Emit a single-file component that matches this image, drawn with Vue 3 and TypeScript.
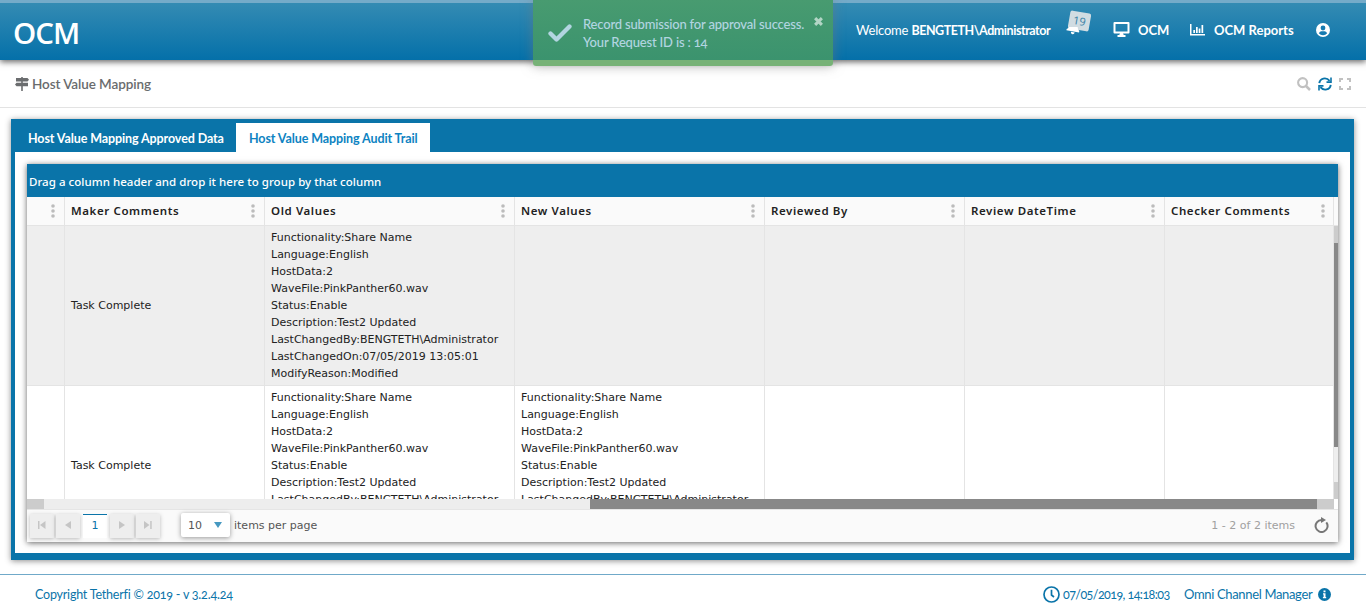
<script setup lang="ts">
interface Row { comment: string; oldValues: string[]; newValues: string[] }

const columns: string[] = ['', 'Maker Comments', 'Old Values', 'New Values', 'Reviewed By', 'Review DateTime', 'Checker Comments']

const details: string[] = [
  'Functionality:Share Name',
  'Language:English',
  'HostData:2',
  'WaveFile:PinkPanther60.wav',
  'Status:Enable',
  'Description:Test2 Updated',
  'LastChangedBy:BENGTETH\\Administrator',
  'LastChangedOn:07/05/2019 13:05:01',
  'ModifyReason:Modified',
]

const rows: Row[] = [
  { comment: 'Task Complete', oldValues: details, newValues: [] },
  { comment: 'Task Complete', oldValues: details, newValues: details },
]
</script>

<template>
  <div class="page">
    <header class="topbar">
      <div class="brand">OCM</div>
      <nav class="nav">
        <span class="welcome">Welcome <b>BENGTETH\Administrator</b></span>
        <span class="bell">
          <span class="count">19</span>
          <svg width="14" height="8" viewBox="0 0 14 8"><g transform="rotate(10 7 4)" fill="#fff"><path d="M2.800 -1H11Q11 1.500 13.200 2.800V4.500H.4V3.200Q2.500 2 2.800 -1Z" /><path d="M5 5.200H9Q8.700 7.300 7 7.300T5 5.200Z" /></g></svg>
        </span>
        <span class="link ocm">
          <svg width="17" height="15" viewBox="0 0 17 15"><path d="M1.500 1H15.500V10.500H1.500Z" fill="none" stroke="#fff" stroke-width="2" stroke-linejoin="round" /><path d="M7 11H10L10.700 13H12.500V15H4.500V13H6.300Z" fill="#fff" /></svg>
          <b>OCM</b>
        </span>
        <span class="link reports">
          <svg width="15" height="12" viewBox="0 0 15 12" fill="#fff"><path d="M0 0H1.500V10H15V11.500H0Z" /><path d="M3.300 6H5V9H3.300ZM6 3H7.700V9H6ZM8.700 4.500H10.400V9H8.700ZM11.500 1H13.200V9H11.500Z" /></svg>
          <b>OCM Reports</b>
        </span>
        <svg class="user" width="14" height="14" viewBox="0 0 14 14"><circle cx="7" cy="7" r="7" fill="#fff" /><circle cx="7" cy="5" r="2.400" fill="#167ab0" /><path d="M2.800 10.300Q4 8.300 5.300 8.300H8.700Q10 8.300 11.200 10.300Q9.500 12.300 7 12.300T2.800 10.300Z" fill="#167ab0" /></svg>
      </nav>
    </header>

    <div class="toast">
      <svg width="24" height="18" viewBox="0 0 24 18"><path d="M2.500 9.500L8.500 15.500L21.500 2.500" fill="none" stroke="#b2d5e1" stroke-width="4.300" stroke-linecap="round" stroke-linejoin="round" /></svg>
      <p>Record submission for approval success.<br>Your Request ID is : 14</p>
      <svg class="close" width="9" height="9" viewBox="0 0 8 8"><path d="M1 1L7 7M7 1L1 7" stroke="#b2d5c5" stroke-width="2.700" /></svg>
    </div>

    <div class="titlebar">
      <svg width="14" height="14" viewBox="0 0 14 14" fill="#6b6d6f"><path d="M6.200 0H7.800V14H6.200Z" /><path d="M1 1H12.500L14 2.800L12.500 4.500H1ZM1.500 5.700H13V9.200H1.500L0 7.400Z" /></svg>
      <h1>Host Value Mapping</h1>
      <span class="tools">
        <svg width="14" height="14" viewBox="0 0 14 14" fill="none" stroke="#c1c1c1"><circle cx="5.600" cy="5.600" r="4.500" stroke-width="2.100" /><path d="M9 9L13 13" stroke-width="2.500" /></svg>
        <svg width="14" height="14" viewBox="0 0 14 14" fill="none" stroke="#0a74a9" stroke-width="1.900"><path d="M1.300 6.200C1.800 1.200 8.200 -.4 11.600 3.800M12.700 7.800C12.200 12.800 5.800 14.400 2.400 10.200" /><path d="M13 .5V5.100H8.500M1 13.500V8.900H5.500" stroke-width="1.600" /></svg>
        <svg width="12" height="12" viewBox="0 0 12 12" fill="none" stroke="#c1c1c1" stroke-width="2"><path d="M1 4V1H4M8 1H11V4M11 8V11H8M4 11H1V8" /></svg>
      </span>
    </div>

    <main class="panel">
      <div class="tabs">
        <span class="tab first">Host Value Mapping Approved Data</span>
        <span class="tab active">Host Value Mapping Audit Trail</span>
      </div>
      <div class="content">
        <section class="grid">
          <div class="group">Drag a column header and drop it here to group by that column</div>
          <div class="line head">
            <div v-for="(c, i) in columns" :key="i" class="cell">
              <span>{{ c }}</span>
              <svg width="4" height="14" viewBox="0 0 4 14" fill="#bcbcbc"><circle cx="2" cy="2" r="1.800" /><circle cx="2" cy="7" r="1.800" /><circle cx="2" cy="12" r="1.800" /></svg>
            </div>
          </div>
          <div class="viewport">
            <div class="rows">
              <div v-for="(r, i) in rows" :key="i" class="line row" :class="{ alt: i === 0 }">
                <div class="cell"></div>
                <div class="cell">{{ r.comment }}</div>
                <div class="cell"><p v-for="d in r.oldValues" :key="d">{{ d }}</p></div>
                <div class="cell"><p v-for="d in r.newValues" :key="d">{{ d }}</p></div>
                <div class="cell"></div>
                <div class="cell"></div>
                <div class="cell"></div>
              </div>
            </div>
            <div class="vbar"><div class="vbtn"></div><div class="vthumb"></div><div class="vtrack"></div><div class="vbtn"></div></div>
          </div>
          <div class="hbar"><div class="hbtn"></div><div class="htrack"></div><div class="hthumb"></div><div class="hbtn"></div></div>
          <div class="pager">
            <span class="pbtn"><svg width="8" height="8" viewBox="0 0 8 8"><path d="M0 0H1.500V8H0ZM7.500 0V8L2 4Z" /></svg></span>
            <span class="pbtn"><svg width="6" height="8" viewBox="0 0 6 8"><path d="M6 0V8L0 4Z" /></svg></span>
            <span class="current">1</span>
            <span class="pbtn"><svg width="6" height="8" viewBox="0 0 6 8"><path d="M0 0V8L6 4Z" /></svg></span>
            <span class="pbtn"><svg width="8" height="8" viewBox="0 0 8 8"><path d="M0 0V8L5.500 4ZM6.200 0H7.700V8H6.200Z" /></svg></span>
            <span class="size">10<svg width="8" height="6" viewBox="0 0 8 6"><path d="M0 0H8L4 6Z" fill="#4799c1" /></svg></span>
            <span class="per">items per page</span>
            <span class="info">1 - 2 of 2 items</span>
            <svg class="reload" width="15" height="16" viewBox="0 0 15 16"><path d="M12.300 5.300A6 6 0 1 1 7.500 3" fill="none" stroke="#777" stroke-width="2" /><path d="M7 0L12 3L7 6Z" fill="#777" /></svg>
          </div>
        </section>
      </div>
    </main>

    <footer class="footer">
      <span class="copy">Copyright Tetherfi © 2019 - v 3.2.4.24</span>
      <svg class="clock" width="17" height="17" viewBox="0 0 17 17" fill="none" stroke="#0a74a9"><circle cx="8.500" cy="8.500" r="7.500" stroke-width="1.700" /><path d="M8.500 3.800V9L11 11" stroke-width="1.700" /></svg>
      <span class="date">07/05/2019, 14:18:03</span>
      <span class="product">Omni Channel Manager</span>
      <svg class="inf" width="13" height="13" viewBox="0 0 13 13"><circle cx="6.500" cy="6.500" r="6.500" fill="#0a74a9" /><path d="M5.500 2.500H7.500V4.300H5.500ZM5 5.300H7.500V9H8.200V10.200H4.900V9H5.600V6.500H5Z" fill="#fff" /></svg>
    </footer>
  </div>
</template>

<style>
body { margin: 0; overflow: hidden; background: #fff; }
</style>

<style scoped>
* { box-sizing: border-box; }
.page { position: relative; width: 1366px; height: 613px; overflow: hidden; background: #fff; font-family: Lato, "Noto Sans", sans-serif; font-size: 13px; font-variant-numeric: oldstyle-nums; }
svg { display: block; flex: none; }
span, h1 { white-space: nowrap; }
.topbar { position: relative; display: flex; align-items: center; justify-content: space-between; height: 60px; border-top: 3px solid #75abc9; padding: 0 36px 0 13px; background: linear-gradient(#348bb3, #0470a9); box-shadow: 0 2px 6px rgba(0, 0, 0, .6); color: #fff; }
.brand { font: 600 29.500px/34px "Open Sans", sans-serif; letter-spacing: -1px; padding-top: 2px; }
.nav { display: flex; align-items: center; height: 100%; padding-bottom: 4px; }
.welcome { width: 211px; letter-spacing: -.2px; }
.welcome b { font-size: 12.5px; letter-spacing: -.45px; }
.bell { position: relative; width: 46px; height: 18px; margin-top: -6px; }
.bell svg { position: absolute; left: -1px; top: 9px; }
.count { position: absolute; left: 2px; top: -6px; width: 21px; height: 18px; transform: rotate(10deg); border-radius: 2px; background: #d0dce2; color: #3e84a8; font: 11px/18px "Noto Sans", sans-serif; text-align: center; }
.link { display: flex; align-items: center; font-size: 13px; }
.ocm { width: 77px; gap: 8px; }
.reports { width: 126px; gap: 9px; }
.toast { position: absolute; z-index: 2; left: 533px; top: 0; width: 300px; height: 66px; display: flex; padding: 15px 10px 0 15px; border-radius: 0 0 3px 3px; background: linear-gradient(#489b70, #3b936e 60px, #77b277 60px, #77b277); box-shadow: 0 0 12px rgba(120, 120, 120, .55); color: #b2d5e1; }
.toast > svg:first-child { margin-top: 9px; }
.toast p { margin: 0 0 0 11px; line-height: 18px; letter-spacing: -.18px; font-weight: 500; white-space: nowrap; }
.toast .close { margin: 2px 0 0 auto; }
.titlebar { display: flex; align-items: center; height: 48px; padding: 0 15px; border-bottom: 1px solid #e3e3e3; color: #696b6d; }
.titlebar h1 { margin: 0 0 0 3px; font-size: 13.5px; font-weight: 600; letter-spacing: -.08px; }
.tools { display: flex; align-items: center; gap: 7px; margin-left: auto; }
.panel { margin: 11px 12px 0 11px; height: 441px; border: 4px solid #0a74a9; border-bottom-width: 7px; background: #fff; box-shadow: 0 1px 6px rgba(0, 0, 0, .45); }
.tabs { display: flex; height: 29px; background: #0a74a9; color: #fff; font-size: 12.5px; font-weight: 700; }
.tab { display: block; padding-left: 13px; padding-top: 1px; line-height: 30px; height: 29px; }
.first { width: 221px; letter-spacing: -.1px; }
.active { width: 194px; background: #fff; color: #0d83c2; letter-spacing: -.1px; }
.content { padding: 12px; }
.grid { width: 1311px; height: 378px; box-shadow: 0 1px 6px rgba(0, 0, 0, .6); background: #fff; font-family: "DejaVu Sans", sans-serif; font-size: 11px; }
.group { height: 33px; padding: 1px 2px 0; background: #0a74a9; color: #fff; font: 500 11.500px/33px "Noto Sans", sans-serif; letter-spacing: .04px; }
.line { display: grid; grid-template-columns: 38px 200px 250px 250px 200px 200px 169px; width: 1307px; }
.cell { border-right: 1px solid #e4e4e4; }
.head { height: 29px; width: 1311px; background: #fafafa; border-bottom: 1px solid #e4e4e4; color: #222; font: 600 11.500px/28px "Noto Sans", sans-serif; letter-spacing: .6px; }
.head .cell { display: flex; justify-content: space-between; align-items: center; padding: 0 9px 0 6px; }
.head .cell:last-child { padding-right: 8px; }
.viewport { display: flex; height: 273px; overflow: hidden; }
.rows { width: 1307px; }
.row { height: 160px; background: #fff; border-bottom: 1px solid #e4e4e4; color: #222; line-height: 17px; }
.row.alt { background: #eee; }
.row .cell { display: flex; flex-direction: column; justify-content: center; padding: 0 6px; white-space: nowrap; overflow: hidden; }
.row p { margin: 0; }
.vbar { width: 4px; height: 273px; }
.vbtn { height: 17px; background: #ccc; }
.vthumb { height: 204px; background: #888; }
.vtrack { height: 35px; background: #eee; }
.hbar { display: flex; height: 10px; background: #fff; }
.hbtn { width: 17px; background: #ccc; }
.htrack { width: 546px; background: #ededed; }
.hthumb { width: 727px; background: #888; }
.pager { display: flex; align-items: center; height: 33px; padding: 0 9px 2px 3px; border-top: 1px solid #e5e5e5; background: #fafafa; color: #555; }
.pbtn { display: flex; align-items: center; justify-content: center; width: 24px; height: 24px; margin: 2px 2px 0 0; background: #eee; box-shadow: 0 1px 4px rgba(0, 0, 0, .25); }
.pbtn svg { fill: #c5c5c5; margin-top: -3px; }
.current { width: 24px; height: 24px; margin: 2px 3px 0 1px; border-top: 1px solid #0a74a9; background: #fff; color: #0a74a9; text-align: center; line-height: 21px; }
.size { display: flex; align-items: center; justify-content: space-between; width: 49px; height: 24px; margin-left: 19px; padding: 0 8px 0 7px; border-radius: 2px; background: #fff; box-shadow: 0 1px 5px rgba(0, 0, 0, .4); }
.per { margin-left: 4px; }
.info { margin-left: auto; margin-right: 19px; color: #a0a0a0; }
.footer { display: flex; align-items: center; height: 39px; margin-top: 14px; padding: 0 35px; border-top: 1px solid #70a9c9; color: #0a74a9; background: #fff; }
.copy { margin-right: auto; font-size: 12.5px; letter-spacing: -.21px; }
.date { width: 121px; margin-left: 3px; font-size: 12.5px; letter-spacing: -.57px; }
.product { width: 130px; margin-right: 4px; letter-spacing: -.34px; }
</style>
